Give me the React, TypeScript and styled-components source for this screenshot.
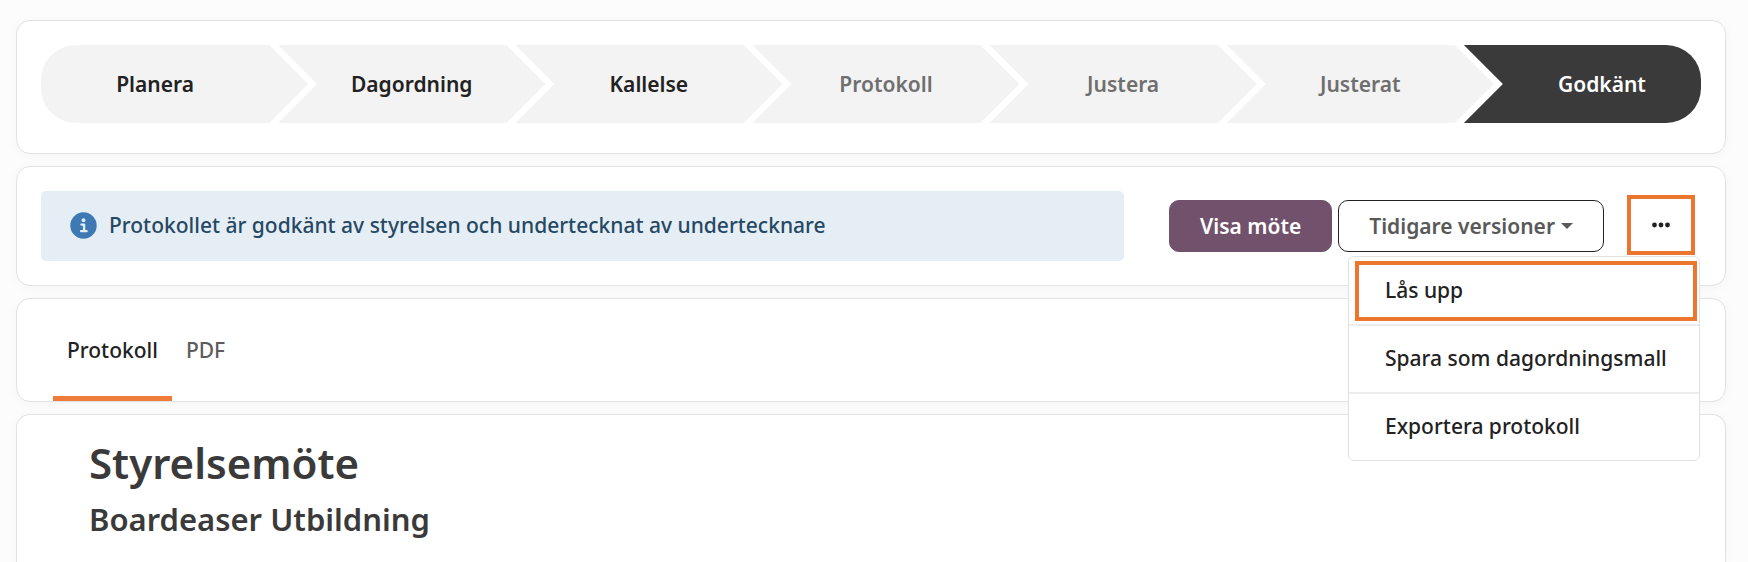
import React from 'react';
import styled, { createGlobalStyle, css } from 'styled-components';

const colors = {
  text: '#222222',
  muted: '#6f6f6f',
  dark: '#3a3a3a',
  border: '#e2e2e2',
  accent: '#ed762f',
  plum: '#71516c',
};

const GlobalStyle = createGlobalStyle`
  *, *::before, *::after { box-sizing: border-box; }
  body {
    margin: 0;
    background: #fcfcfc;
    color: ${colors.text};
    font-family: "Noto Sans", "Open Sans", sans-serif;
    font-size: 21px;
    line-height: 30px;
    font-weight: 500;
  }
  a { color: inherit; text-decoration: none; }
  button { font: inherit; cursor: pointer; }
`;

const Page = styled.main`
  display: flex;
  flex-direction: column;
  gap: 12px;
  min-height: 100vh;
  padding: 20px 22px 0 16px;
`;

const Card = styled.section`
  border: 1px solid ${colors.border};
  border-radius: 14px;
  background: #ffffff;
  box-shadow: 0 2px 12px rgba(0, 0, 0, 0.03);
`;

const ProgressCard = styled(Card)`
  padding: 24px 24px 30px;
`;

const Steps = styled.ol`
  display: flex;
  margin: 0;
  padding: 0;
  list-style: none;
`;

type StepState = 'done' | 'muted' | 'current';

const stepText = { done: colors.text, muted: colors.muted, current: '#ffffff' };

const Step = styled.li<{ $state: StepState }>`
  flex: 1 1 0;
  min-width: 0;
  position: relative;
  color: ${(p) => stepText[p.$state]};

  /* Chevron background; its tip reaches into the notch of the next step. */
  &::before {
    content: '';
    position: absolute;
    inset: 0 -30px 0 0;
    background: ${(p) => (p.$state === 'current' ? colors.dark : '#f3f3f3')};
    clip-path: polygon(0 0, calc(100% - 39px) 0, 100% 50%, calc(100% - 39px) 100%, 0 100%, 39px 50%);
  }
  &:first-child::before {
    border-radius: 35px 0 0 35px;
    clip-path: polygon(0 0, calc(100% - 39px) 0, 100% 50%, calc(100% - 39px) 100%, 0 100%);
  }
  &:last-child::before {
    right: 0;
    border-radius: 0 35px 35px 0;
    clip-path: polygon(0 0, 100% 0, 100% 100%, 0 100%, 39px 50%);
  }
`;

const StepLink = styled.a`
  position: relative;
  display: flex;
  align-items: center;
  justify-content: center;
  height: 78px;
  padding: 0 9px 0 39px;
  font-weight: 600;

  ${Step}:first-child & { padding-left: 0; }
  ${Step}:last-child & { padding-right: 0; }
`;

const Toolbar = styled(Card)`
  display: flex;
  align-items: center;
  gap: 45px;
  padding: 24px;
`;

const Notice = styled.p`
  flex: 1;
  display: flex;
  align-items: center;
  gap: 12px;
  min-height: 70px;
  margin: 0;
  padding: 0 29px 2px;
  border-radius: 5px;
  background: #e5eef5;
  color: #274863;
`;

const Actions = styled.div`
  display: flex;
  align-items: center;
  gap: 6px;
  padding-right: 6px;
`;

const Button = styled.button<{ $primary?: boolean }>`
  display: flex;
  align-items: center;
  gap: 6px;
  height: 52px;
  padding: 0 30px;
  border: 1px solid ${colors.text};
  border-radius: 10px;
  background: #ffffff;
  color: #595959;
  font-weight: 600;
  white-space: nowrap;
  ${(p) =>
    p.$primary &&
    css`
      border-color: ${colors.plum};
      background: ${colors.plum};
      color: #ffffff;
    `}
`;

const MenuAnchor = styled.div`
  position: relative;
  margin: 0 0 2px 17px;
`;

const MoreButton = styled.button`
  display: flex;
  align-items: center;
  justify-content: center;
  width: 68px;
  height: 60px;
  padding: 0;
  border: 4px solid ${colors.accent};
  background: #ffffff;
  color: ${colors.text};
`;

const Menu = styled.ul`
  position: absolute;
  top: calc(100% + 1px);
  right: -5px;
  z-index: 10;
  width: 352px;
  margin: 0;
  padding: 0;
  border: 1px solid ${colors.border};
  border-radius: 6px;
  background: #ffffff;
  list-style: none;
`;

const MenuItem = styled.li`
  display: flex;
  height: 67px;
  padding: 4px 2px 3px 6px;

  & + & {
    height: 68px;
    padding-bottom: 4px;
    border-top: 2px solid #ececec;
  }
`;

const MenuLink = styled.a<{ $highlighted?: boolean }>`
  flex: 1;
  display: flex;
  align-items: center;
  padding: 0 26px 2px;
  border: 4px solid ${(p) => (p.$highlighted ? colors.accent : 'transparent')};
  white-space: nowrap;
`;

const TabCard = styled(Card)`
  padding: 0 36px;
`;

const Tabs = styled.nav`
  display: flex;
`;

const Tab = styled.a<{ $active?: boolean }>`
  display: flex;
  align-items: center;
  height: 102px;
  padding: 4px 14px 0;
  border-bottom: 5px solid ${(p) => (p.$active ? '#f07c3b' : 'transparent')};
  color: ${(p) => (p.$active ? colors.text : '#5c5c5c')};
`;

const Document = styled(Card)`
  flex: 1;
  padding: 20px 72px;
  border-bottom: 0;
  border-radius: 14px 14px 0 0;
  color: ${colors.dark};
`;

const Title = styled.h1`
  margin: 0;
  font-size: 42px;
  line-height: 56px;
  font-weight: 600;
`;

const Subtitle = styled.h2`
  margin: 8px 0 0;
  font-size: 31px;
  line-height: 40px;
  font-weight: 600;
`;

const steps: { label: string; state: StepState }[] = [
  { label: 'Planera', state: 'done' },
  { label: 'Dagordning', state: 'done' },
  { label: 'Kallelse', state: 'done' },
  { label: 'Protokoll', state: 'muted' },
  { label: 'Justera', state: 'muted' },
  { label: 'Justerat', state: 'muted' },
  { label: 'Godkänt', state: 'current' },
];

const InfoIcon = () => (
  <svg width="27" height="27" viewBox="0 0 27 27" aria-hidden="true">
    <circle cx="13.5" cy="13.5" r="13.2" fill="#3f79b4" />
    <circle cx="13.5" cy="8.2" r="1.9" fill="#e5eef5" />
    <path d="M11.4 12.6h2.7v6.3M11 19.2h5.6" fill="none" stroke="#e5eef5" strokeWidth="2.3" strokeLinecap="round" strokeLinejoin="round" />
  </svg>
);

const Caret = () => (
  <svg width="12" height="6" viewBox="0 0 12 6" aria-hidden="true">
    <path d="M0 0h12L6 6z" fill="currentColor" />
  </svg>
);

const Dots = () => (
  <svg width="18" height="6" viewBox="0 0 18 6" aria-hidden="true">
    <circle cx="2.5" cy="3" r="2.4" fill="currentColor" />
    <circle cx="9" cy="3" r="2.4" fill="currentColor" />
    <circle cx="15.5" cy="3" r="2.4" fill="currentColor" />
  </svg>
);

export default function App() {
  return (
    <>
      <GlobalStyle />
      <Page>
        <ProgressCard>
          <Steps>
            {steps.map(({ label, state }) => (
              <Step key={label} $state={state} aria-current={state === 'current' ? 'step' : undefined}>
                <StepLink href="#">{label}</StepLink>
              </Step>
            ))}
          </Steps>
        </ProgressCard>

        <Toolbar>
          <Notice>
            <InfoIcon />
            Protokollet är godkänt av styrelsen och undertecknat av undertecknare
          </Notice>
          <Actions>
            <Button type="button" $primary>Visa möte</Button>
            <Button type="button">
              Tidigare versioner
              <Caret />
            </Button>
            <MenuAnchor>
              <MoreButton type="button" aria-label="Fler val" aria-expanded="true">
                <Dots />
              </MoreButton>
              <Menu>
                <MenuItem><MenuLink href="#" $highlighted>Lås upp</MenuLink></MenuItem>
                <MenuItem><MenuLink href="#">Spara som dagordningsmall</MenuLink></MenuItem>
                <MenuItem><MenuLink href="#">Exportera protokoll</MenuLink></MenuItem>
              </Menu>
            </MenuAnchor>
          </Actions>
        </Toolbar>

        <TabCard>
          <Tabs>
            <Tab href="#" $active>Protokoll</Tab>
            <Tab href="#">PDF</Tab>
          </Tabs>
        </TabCard>

        <Document>
          <Title>Styrelsemöte</Title>
          <Subtitle>Boardeaser Utbildning</Subtitle>
        </Document>
      </Page>
    </>
  );
}
